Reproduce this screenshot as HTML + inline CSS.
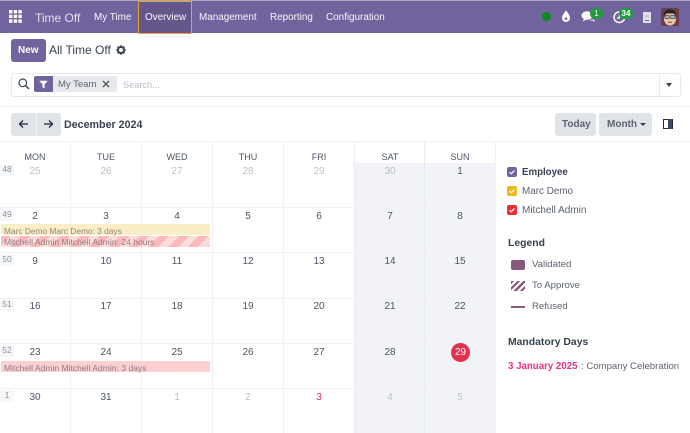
<!DOCTYPE html>
<html><head><meta charset="utf-8">
<style>
html,body{margin:0;padding:0;background:#fff}
#p{position:relative;width:690px;height:433px;overflow:hidden;background:#fff;font-family:"Liberation Sans",sans-serif;font-size:10px;color:#374151;filter:blur(.35px)}
#p div,#p span.a,#p svg{position:absolute}
.t{position:absolute;white-space:nowrap;line-height:14px}
.c{transform:translateX(-50%)}
.n{color:#fff;font-size:9.9px;top:11px;opacity:.95}
.d{font-size:10px;color:#4b5563;margin-top:1px}
.m{color:#bcc1c8}
.h{font-size:9px;color:#4b5563;top:150px}
.w{left:0;width:14px;height:12px;background:#f6f7f8;color:#8b929c;font-size:8.5px;text-align:center;line-height:11px}
.v{top:141px;width:1px;height:292px;background:#eff1f3}
.r{left:0;width:495px;height:1px;background:#eff1f3}
.cb{left:507px;width:10px;height:10px;border-radius:2px}
</style></head><body><div id="p">

<div style="left:0;top:0;width:690px;height:33px;background:#71639e"></div>
<div style="left:0;top:0;width:690px;height:1px;background:#a9a5b5"></div>
<div style="left:138px;top:1px;width:52px;height:31px;background:#655789;border:1px solid #e8a33a"></div>

<svg style="left:9px;top:10px" width="13" height="13" viewBox="0 0 13 13" fill="#fff"><rect x="0" y="0" width="3.4" height="3.4"/><rect x="4.7" y="0" width="3.4" height="3.4"/><rect x="9.4" y="0" width="3.4" height="3.4"/><rect x="0" y="4.7" width="3.4" height="3.4"/><rect x="4.7" y="4.7" width="3.4" height="3.4"/><rect x="9.4" y="4.7" width="3.4" height="3.4"/><rect x="0" y="9.4" width="3.4" height="3.4"/><rect x="4.7" y="9.4" width="3.4" height="3.4"/><rect x="9.4" y="9.4" width="3.4" height="3.4"/></svg>
<span class="t n" style="left:35px;font-size:12px;top:11px;opacity:.8">Time Off</span>
<span class="t n" style="left:94px">My Time</span>
<span class="t n" style="left:145px">Overview</span>
<span class="t n" style="left:199px">Management</span>
<span class="t n" style="left:270px">Reporting</span>
<span class="t n" style="left:326px">Configuration</span>

<div style="left:542px;top:12px;width:9px;height:9px;border-radius:50%;background:#0a8a1e"></div>
<svg style="left:561px;top:10px" width="10" height="13" viewBox="0 0 10 13"><path d="M5 .5C5 .5 9 5 9 8a4 4 0 0 1-8 0C1 5 5 .5 5 .5z" fill="#fff"/><circle cx="5" cy="8.6" r="1.3" fill="#71639e"/></svg>
<svg style="left:581px;top:10px" width="15" height="13" viewBox="0 0 15 13"><ellipse cx="6" cy="5.5" rx="5.5" ry="4.3" fill="#fff"/><path d="M3 8.5 L2 11.5 L6 9z" fill="#fff"/><path d="M9 10h3.5l.8 1.6L12 10.5" fill="#e9e6f1" stroke="#e9e6f1"/></svg>
<div style="left:590px;top:8px;width:13px;height:11px;border-radius:6px;background:#1f9d3a;color:#fff;font-size:8px;line-height:11px;text-align:center">1</div>
<svg style="left:612px;top:10px" width="15" height="15" viewBox="0 0 15 15"><path d="M10.8 3.2A5.3 5.3 0 1 0 12.6 8" fill="none" stroke="#fff" stroke-width="1.5"/><path d="M7.3 4.5V8H5" fill="none" stroke="#fff" stroke-width="1.2"/></svg>
<div style="left:619px;top:8px;width:14px;height:11px;border-radius:6px;background:#1f9d3a;color:#fff;font-size:8px;font-weight:bold;line-height:11px;text-align:center">34</div>
<div style="left:643px;top:12px;width:8px;height:11px;background:#dfe0ec"></div>
<div style="left:645px;top:20px;width:4px;height:1px;background:#6a6db5"></div>
<div style="left:645px;top:15px;width:4px;height:2px;background:#c4c5d8"></div>

<svg style="left:661px;top:8px;border-radius:2px" width="18" height="18" viewBox="0 0 18 18"><rect width="18" height="18" fill="#6a3f4c"/><ellipse cx="9" cy="11" rx="6" ry="6.5" fill="#e9c5ad"/><path d="M2.5 8C3 2.5 6 1.5 9 1.5S15 2.5 15.5 8L13.5 5.5H5L2.5 8z" fill="#2b2524"/><rect x="4" y="7.5" width="4.2" height="3" fill="#a9b2b0" stroke="#333" stroke-width=".6"/><rect x="9.8" y="7.5" width="4.2" height="3" fill="#a9b2b0" stroke="#333" stroke-width=".6"/><path d="M7 14.3h4" stroke="#8b4a45" stroke-width="1"/></svg>

<div style="left:11px;top:39px;width:35px;height:23px;background:#71639e;border-radius:3px"></div>
<span class="t" style="left:18px;top:44px;color:#fff;font-weight:bold;font-size:10px">New</span>
<span class="t" style="left:49px;top:43px;font-size:12px;color:#374151">All Time Off</span>
<svg style="left:116px;top:45px" width="10" height="10" viewBox="0 0 10 10"><circle cx="5" cy="5" r="3" fill="none" stroke="#374151" stroke-width="2"/><g stroke="#374151" stroke-width="1.6"><path d="M5 .2v1.6M5 8.2v1.6M.2 5h1.6M8.2 5h1.6M1.6 1.6l1.1 1.1M7.3 7.3l1.1 1.1M8.4 1.6L7.3 2.7M2.7 7.3L1.6 8.4"/></g></svg>

<div style="left:11px;top:73px;width:668px;height:22px;border:1px solid #e7e9ed;border-radius:3px"></div>
<div style="left:659px;top:74px;width:1px;height:22px;background:#e7e9ed"></div>
<div style="left:666px;top:83px;width:0;height:0;border-left:3.5px solid transparent;border-right:3.5px solid transparent;border-top:4px solid #374151"></div>
<svg style="left:18px;top:78px" width="12" height="12" viewBox="0 0 12 12"><circle cx="4.8" cy="4.8" r="3.8" fill="none" stroke="#374151" stroke-width="1.2"/><path d="M7.6 7.6L11 11" stroke="#374151" stroke-width="1.4"/></svg>
<div style="left:34px;top:76px;width:83px;height:16px;background:#e7e9ed;border-radius:2px"></div>
<div style="left:34px;top:76px;width:19px;height:16px;background:#71639e;border-radius:2px 0 0 2px"></div>
<svg style="left:39px;top:80px" width="9" height="9" viewBox="0 0 9 9"><path d="M.3.8h8.4L5.6 4.5V8.5L3.4 7.2V4.5z" fill="#fff"/></svg>
<span class="t" style="left:58px;top:78px;color:#5b6470;font-size:9.5px">My Team</span>
<svg style="left:102px;top:80px" width="8" height="8" viewBox="0 0 8 8"><path d="M1 1l6 6M7 1L1 7" stroke="#4b5563" stroke-width="1.3"/></svg>
<span class="t" style="left:123px;top:78px;color:#b7bcc4;font-size:9.2px">Search...</span>

<div style="left:0;top:106px;width:690px;height:1px;background:#eff0f2"></div>

<div style="left:11px;top:113px;width:50px;height:23px;background:#e0e3e8;border-radius:3px"></div>
<div style="left:36px;top:113px;width:1px;height:23px;background:#f3f4f6"></div>
<svg style="left:18px;top:119px" width="11" height="10" viewBox="0 0 11 10"><path d="M10 5H1.5M5 1.5L1.5 5 5 8.5" fill="none" stroke="#1f2937" stroke-width="1.3"/></svg>
<svg style="left:43px;top:119px" width="11" height="10" viewBox="0 0 11 10"><path d="M1 5h8.5M6 1.5L9.5 5 6 8.5" fill="none" stroke="#1f2937" stroke-width="1.3"/></svg>
<span class="t" style="left:64px;top:118px;font-size:10.7px;font-weight:bold;color:#374151">December 2024</span>

<div style="left:555px;top:113px;width:41px;height:23px;background:#e0e3e8;border-radius:3px"></div>
<span class="t" style="left:562px;top:118px;font-weight:bold;font-size:10px;color:#5b6470">Today</span>
<div style="left:599px;top:113px;width:53px;height:23px;background:#e0e3e8;border-radius:3px"></div>
<span class="t" style="left:607px;top:118px;font-weight:bold;font-size:10px;color:#5b6470">Month</span>
<div style="left:640px;top:123px;width:0;height:0;border-left:3px solid transparent;border-right:3px solid transparent;border-top:3px solid #374151"></div>
<div style="left:663px;top:119px;width:8px;height:8px;border:1px solid #1f2937"></div>
<div style="left:668px;top:119px;width:4px;height:10px;background:#3d4a66"></div>

<div style="left:0;top:141px;width:690px;height:1px;background:#eff0f2"></div>
<div style="left:355px;top:163px;width:140px;height:270px;background:#f1f3f6"></div>

<div class="v" style="left:70px"></div>
<div class="v" style="left:141px"></div>
<div class="v" style="left:212px"></div>
<div class="v" style="left:283px"></div>
<div class="v" style="left:354px;background:#e8ebef"></div>
<div class="v" style="left:424px;background:#e8ebef"></div>
<div class="v" style="left:495px"></div>
<div class="r" style="top:207px"></div>
<div class="r" style="top:252px"></div>
<div class="r" style="top:298px"></div>
<div class="r" style="top:343px"></div>
<div class="r" style="top:388px"></div>

<span class="t c h" style="left:35px">MON</span>
<span class="t c h" style="left:106px">TUE</span>
<span class="t c h" style="left:177px">WED</span>
<span class="t c h" style="left:248px">THU</span>
<span class="t c h" style="left:319px">FRI</span>
<span class="t c h" style="left:390px">SAT</span>
<span class="t c h" style="left:460px">SUN</span>

<div class="w" style="top:164px">48</div>
<div class="w" style="top:209px">49</div>
<div class="w" style="top:254px">50</div>
<div class="w" style="top:299px">51</div>
<div class="w" style="top:345px">52</div>
<div class="w" style="top:390px">1</div>

<span class="t c d m" style="left:35px;top:164px">25</span>
<span class="t c d m" style="left:106px;top:164px">26</span>
<span class="t c d m" style="left:177px;top:164px">27</span>
<span class="t c d m" style="left:248px;top:164px">28</span>
<span class="t c d m" style="left:319px;top:164px">29</span>
<span class="t c d m" style="left:390px;top:164px">30</span>
<span class="t c d" style="left:460px;top:164px">1</span>

<span class="t c d" style="left:35px;top:209px">2</span>
<span class="t c d" style="left:106px;top:209px">3</span>
<span class="t c d" style="left:177px;top:209px">4</span>
<span class="t c d" style="left:248px;top:209px">5</span>
<span class="t c d" style="left:319px;top:209px">6</span>
<span class="t c d" style="left:390px;top:209px">7</span>
<span class="t c d" style="left:460px;top:209px">8</span>

<span class="t c d" style="left:35px;top:254px">9</span>
<span class="t c d" style="left:106px;top:254px">10</span>
<span class="t c d" style="left:177px;top:254px">11</span>
<span class="t c d" style="left:248px;top:254px">12</span>
<span class="t c d" style="left:319px;top:254px">13</span>
<span class="t c d" style="left:390px;top:254px">14</span>
<span class="t c d" style="left:460px;top:254px">15</span>

<span class="t c d" style="left:35px;top:299px">16</span>
<span class="t c d" style="left:106px;top:299px">17</span>
<span class="t c d" style="left:177px;top:299px">18</span>
<span class="t c d" style="left:248px;top:299px">19</span>
<span class="t c d" style="left:319px;top:299px">20</span>
<span class="t c d" style="left:390px;top:299px">21</span>
<span class="t c d" style="left:460px;top:299px">22</span>

<span class="t c d" style="left:35px;top:345px">23</span>
<span class="t c d" style="left:106px;top:345px">24</span>
<span class="t c d" style="left:177px;top:345px">25</span>
<span class="t c d" style="left:248px;top:345px">26</span>
<span class="t c d" style="left:319px;top:345px">27</span>
<span class="t c d" style="left:390px;top:345px">28</span>
<div style="left:451px;top:343px;width:19px;height:19px;border-radius:50%;background:#e0324c"></div>
<span class="t c d" style="left:460.5px;top:345px;color:#fff">29</span>

<span class="t c d" style="left:35px;top:390px">30</span>
<span class="t c d" style="left:106px;top:390px">31</span>
<span class="t c d m" style="left:177px;top:390px">1</span>
<span class="t c d m" style="left:248px;top:390px">2</span>
<span class="t c d" style="left:319px;top:390px;color:#d9344f">3</span>
<span class="t c d m" style="left:390px;top:390px">4</span>
<span class="t c d m" style="left:460px;top:390px">5</span>

<div style="left:1px;top:224px;width:209px;height:11px;background:#f9eec6;border-radius:2px"></div>
<span class="t" style="left:4px;top:224px;font-size:8.35px;color:#8c8a76">Marc Demo Marc Demo: 3 days</span>
<div style="left:1px;top:236px;width:209px;height:11px;border-radius:2px;background:repeating-linear-gradient(135deg,#fbb9ba 0 7px,#fddcdc 7px 14px)"></div>
<span class="t" style="left:4px;top:235px;font-size:8.55px;color:#8e7c80">Mitchell Admin Mitchell Admin: 24 hours</span>
<div style="left:1px;top:361px;width:209px;height:11px;background:#fccfd0;border-radius:2px"></div>
<span class="t" style="left:4px;top:361px;font-size:8.55px;color:#8e7c80">Mitchell Admin Mitchell Admin: 3 days</span>

<svg class="cb" style="top:167px;background:#71639e" width="10" height="10" viewBox="0 0 10 10"><path d="M2.5 5.2l1.8 1.6 3.2-3.4" fill="none" stroke="#fff" stroke-width="1.1"/></svg>
<span class="t" style="left:522px;top:166px;font-weight:bold;font-size:9.7px;color:#374151">Employee</span>
<svg class="cb" style="top:186px;background:#eeb91c" width="10" height="10" viewBox="0 0 10 10"><path d="M2.5 5.2l1.8 1.6 3.2-3.4" fill="none" stroke="#fff" stroke-width="1.1"/></svg>
<span class="t" style="left:522px;top:185px;font-size:9.9px;color:#5b6470">Marc Demo</span>
<svg class="cb" style="top:205px;background:#ee2d35" width="10" height="10" viewBox="0 0 10 10"><path d="M2.5 5.2l1.8 1.6 3.2-3.4" fill="none" stroke="#fff" stroke-width="1.1"/></svg>
<span class="t" style="left:522px;top:204px;font-size:10px;color:#5b6470">Mitchell Admin</span>

<span class="t" style="left:508px;top:237px;font-size:10.4px;font-weight:bold;color:#374151">Legend</span>
<div style="left:511px;top:260px;width:14px;height:10px;background:#875a7b;border-radius:2px"></div>
<span class="t" style="left:532px;top:258px;color:#5b6470;font-size:9.6px">Validated</span>
<div style="left:511px;top:281px;width:14px;height:10px;background:repeating-linear-gradient(135deg,#875a7b 0 2.2px,#fff 2.2px 4.4px)"></div>
<span class="t" style="left:532px;top:279px;color:#5b6470;font-size:9.6px">To Approve</span>
<div style="left:511px;top:306px;width:14px;height:2px;background:#875a7b"></div>
<span class="t" style="left:532px;top:300px;color:#5b6470;font-size:9.6px">Refused</span>

<span class="t" style="left:508px;top:336px;font-size:10.4px;font-weight:bold;color:#374151">Mandatory Days</span>
<span class="t" style="left:508px;top:360px;font-size:9.7px;font-weight:bold;color:#ec2f86">3 January 2025</span>
<span class="t" style="left:581px;top:360px;font-size:9.6px;color:#5b6470">: Company Celebration</span>

</div></body></html>
